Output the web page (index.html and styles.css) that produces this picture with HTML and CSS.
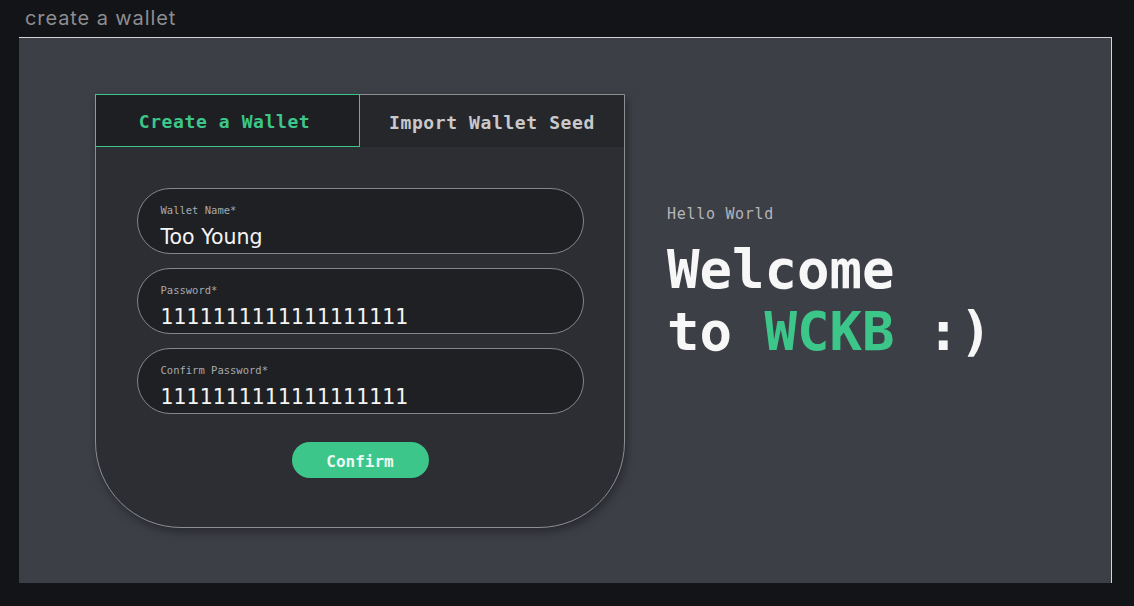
FILE: index.html
```html
<!DOCTYPE html>
<html>
<head>
<meta charset="utf-8">
<link rel="stylesheet" href="styles.css">
</head>
<body>
<div class="title">create a wallet</div>
<div class="canvas">
  <div class="card">
    <div class="tabs">
      <div class="tab active">Create a Wallet</div>
      <div class="tab">Import Wallet Seed</div>
    </div>
    <div class="body">
      <div class="field">
        <div class="label">Wallet Name*</div>
        <div class="value">Too Young</div>
      </div>
      <div class="field">
        <div class="label">Password*</div>
        <div class="value">1111111111111111111</div>
      </div>
      <div class="field">
        <div class="label">Confirm Password*</div>
        <div class="value">1111111111111111111</div>
      </div>
      <button class="confirm">Confirm</button>
    </div>
  </div>
  <div class="hero">
    <div class="hello">Hello World</div>
    <h1 class="welcome">Welcome<br>to <span class="brand">WCKB</span> :)</h1>
  </div>
</div>
</body>
</html>
```
FILE: styles.css
```css
html, body {
  margin: 0;
  padding: 0;
  background: #131417;
  width: 1134px;
  height: 606px;
  overflow: hidden;
}
.title {
  font-family: Inter, "Liberation Sans", sans-serif;
  font-size: 20px;
  letter-spacing: 0.9px;
  color: #8c8d90;
  padding: 4px 0 0 25px;
  height: 37px;
  box-sizing: border-box;
  line-height: 28px;
}
.canvas {
  margin-left: 19px;
  width: 1093px;
  height: 546px;
  box-sizing: border-box;
  background: #3d3f47;
  border-top: 1px solid #d4d4d6;
  border-right: 1px solid #d4d4d6;
  display: flex;
  align-items: flex-start;
  padding: 56px 0 0 76px;
}
.card {
  width: 530px;
  height: 434px;
  box-sizing: border-box;
  background: #2d2e33;
  border: 1px solid #8d8e92;
  border-radius: 0 0 86px 86px;
  box-shadow: 2px 4px 10px rgba(0,0,0,0.35);
  display: flex;
  flex-direction: column;
}
.tabs {
  display: grid;
  grid-template-columns: 264px 1fr;
  height: 52px;
}
.tab {
  display: flex;
  align-items: center;
  justify-content: center;
  font-family: "DejaVu Sans Mono", monospace;
  font-weight: bold;
  font-size: 18px;
  letter-spacing: 0.6px;
  color: #c9c9cc;
  background: #26272b;
  padding-top: 2px;
}
.tab.active {
  color: #3cc68a;
  background: #1e1f22;
  border: 1px solid #3cc68a;
  margin: -1px 0 0 -1px;
  padding-right: 6px;
}
.body {
  display: flex;
  flex-direction: column;
  align-items: center;
  padding-top: 41px;
  gap: 14px;
}
.field {
  width: 447px;
  height: 66px;
  box-sizing: border-box;
  background: #1f2024;
  border: 1px solid #85868a;
  border-radius: 33px;
  padding: 14px 0 0 23px;
}
.label {
  font-family: "DejaVu Sans Mono", monospace;
  font-size: 10.5px;
  color: #a8a9ac;
  line-height: 14px;
}
.value {
  font-family: "DejaVu Sans", sans-serif;
  font-size: 20.5px;
  color: #f4f4f4;
  line-height: 26px;
  margin-top: 7px;
}
.confirm {
  margin-top: 14px;
  width: 137px;
  height: 36px;
  border: none;
  border-radius: 18px;
  background: #3cc68a;
  color: #eef9f3;
  font-family: "DejaVu Sans Mono", monospace;
  font-weight: 600;
  font-size: 16px;
  padding: 2px 0 0;
}
.hero {
  margin-left: 42px;
  padding-top: 111px;
}
.hello {
  font-family: "DejaVu Sans Mono", monospace;
  font-size: 15px;
  letter-spacing: 0.7px;
  color: #b4b5b8;
  line-height: 18px;
}
.welcome {
  margin: 16px 0 0;
  font-family: "DejaVu Sans Mono", monospace;
  font-weight: bold;
  font-size: 54px;
  line-height: 62px;
  color: #f7f7f7;
}
.brand {
  color: #3cc68a;
}
```
